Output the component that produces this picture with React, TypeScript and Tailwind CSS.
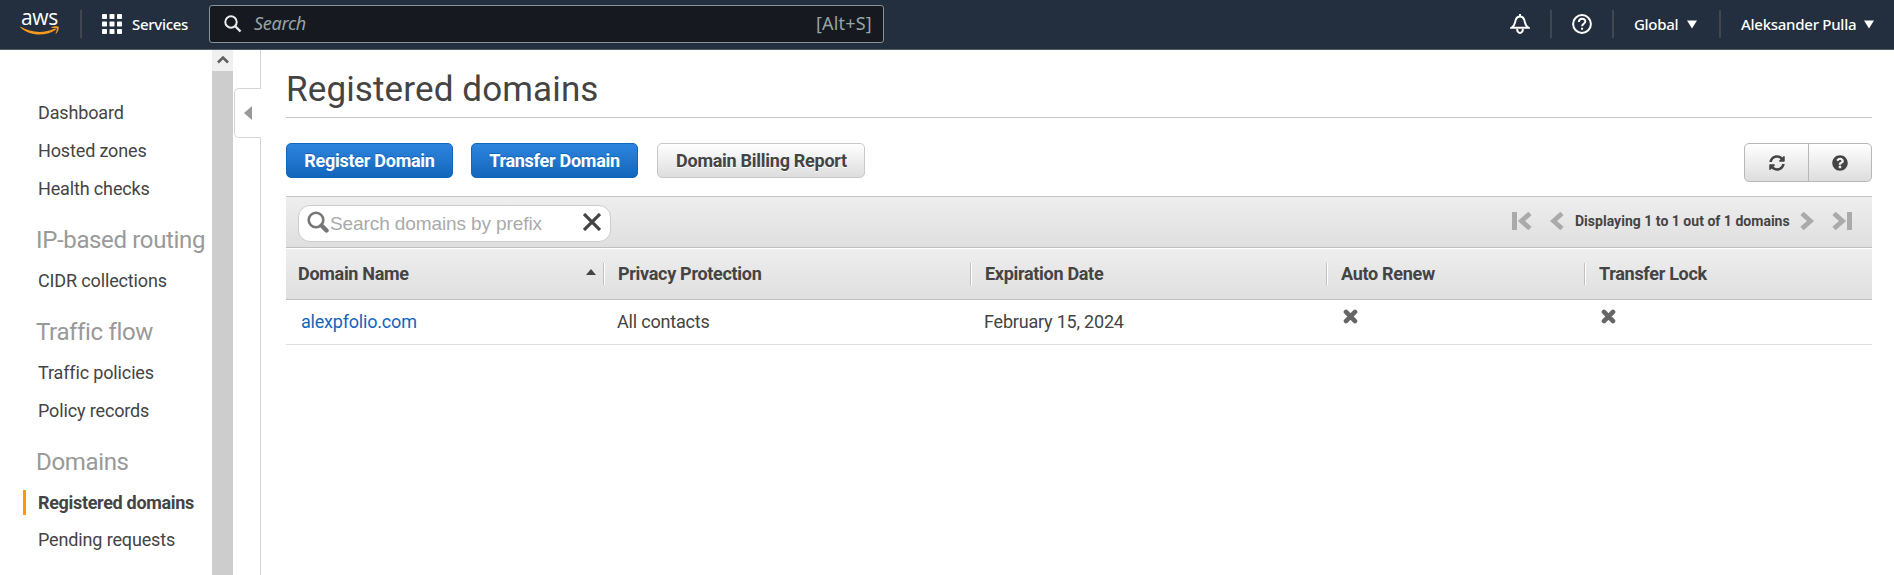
import type { ReactNode } from "react";
import { FaSyncAlt, FaQuestionCircle } from "react-icons/fa";

function Caret() {
  return (
    <svg width="10" height="9" viewBox="0 0 10 9" className="shrink-0">
      <path d="M0 0.5h10L5 8.5z" fill="#fff" />
    </svg>
  );
}

function Divider() {
  return <div className="h-7 w-[2px] shrink-0 bg-[#414750]" />;
}

function AwsLogo() {
  return (
    <div className="relative h-[26px] w-10 shrink-0">
      <span className="absolute -top-[8px] left-[1px] font-['Open_Sans'] text-[21px] leading-[28px] font-medium tracking-[-0.3px] text-white">aws</span>
      <svg className="absolute top-[15px] left-0" width="40" height="10" viewBox="0 0 40 10">
        <path d="M0.8 0.8C11 7 24 7.6 34.8 2.6c1.2-.4 1.6.6.6 1.3C25.500 10.700 9 10 .5 1.500-.1.9.3.5.8.8z" fill="#f7981f" />
        <path d="M31.500 1.300c2.500-1.600 6.300-1.300 7-.6.700.8 0 5-2.400 7.100-.4.3-.8.1-.6-.3.600-1.400 1.700-4.200 1.200-5-.5-.7-3.300-.5-4.800-.4-.5 0-.8-.5-.4-.8z" fill="#f7981f" />
      </svg>
    </div>
  );
}

function TopBar() {
  return (
    <header className="flex h-[50px] shrink-0 items-start border-b border-[#545b64] bg-[#232f3e] pl-5 font-['Noto_Sans'] text-[15px] font-medium text-white">
      <div className="pt-[11px]"><AwsLogo /></div>
      <div className="ml-5 pt-[10px]"><Divider /></div>
      <svg className="mt-[14px] ml-5 shrink-0" width="20" height="20" viewBox="0 0 20 20" fill="#fff">
        {[0, 7.5, 15].map((y) => [0, 7.5, 15].map((x) => <rect key={`${x}-${y}`} x={x} y={y} width="5" height="5" rx="0.8" />))}
      </svg>
      <span className="mt-[10px] ml-[10px] w-[77px] shrink-0 leading-[28px] tracking-[-0.3px]">Services</span>
      <div className="flex h-[38px] w-[675px] shrink-0 items-center rounded-[3px] border border-[#879596] bg-[#16191f] mt-[5px] pr-[11px] pl-[14px] text-[18px] font-normal text-[#95a5a6]">
        <svg width="18" height="18" viewBox="0 0 18 18" fill="none" stroke="#eaeded" strokeWidth="2">
          <circle cx="7" cy="7" r="5.700" />
          <path d="M11 11l5.500 5.500" strokeWidth="2.400" />
        </svg>
        <span className="-mt-px ml-3 italic tracking-[-0.3px]">Search</span>
        <span className="-mt-px ml-auto tracking-[0.2px]">[Alt+S]</span>
      </div>
      <div className="mr-5 ml-auto flex h-12 items-center">
        <svg width="20" height="21" viewBox="0 0 20 21" fill="none" stroke="#fff" strokeWidth="2" className="mr-[20px]">
          <path d="M10 0v3M1.500 13.800h17C14.700 11.300 15.300 9 14.300 6 13.500 3.500 12 2.500 10 2.500S6.500 3.500 5.700 6C4.700 9 5.300 11.300 1.500 13.800zM7.200 15c-.3 5.200 5.900 5.200 5.600 0" />
        </svg>
        <Divider />
        <svg width="20" height="20" viewBox="0 0 20 20" fill="none" stroke="#fff" strokeWidth="2" className="mx-5">
          <circle cx="10" cy="10" r="8.900" />
          <path d="M6.900 8c0-4.400 6.400-4.200 6.400-.6 0 2.300-3.200 2.300-3.200 4.800M10.100 13.800v2" />
        </svg>
        <Divider />
        <span className="mr-[7px] ml-5 w-[46px] tracking-[-0.3px]">Global</span>
        <Caret />
        <div className="ml-[22px]"><Divider /></div>
        <span className="mr-[7px] ml-5 w-[116px] whitespace-nowrap tracking-[-0.27px]">Aleksander Pulla</span>
        <Caret />
      </div>
    </header>
  );
}

function NavItem({ children, active = false }: { children: ReactNode; active?: boolean }) {
  if (active) {
    return (
      <a className="flex h-[37px] items-center pl-[23px]">
        <span className="h-[25px] w-[3px] bg-[#ff9900]" />
        <span className="ml-[12px] font-bold whitespace-nowrap tracking-[-0.32px]">{children}</span>
      </a>
    );
  }
  return <a className="block h-[38px] pl-[38px] leading-[38px] whitespace-nowrap tracking-[-0.14px]">{children}</a>;
}

function NavHeading({ children }: { children: ReactNode }) {
  return <h2 className="h-[54px] pt-[12px] pl-[36px] text-[24px] leading-[40px] whitespace-nowrap tracking-[-0.35px] text-[#999]">{children}</h2>;
}

function Sidebar() {
  return (
    <nav className="w-[212px] shrink-0 overflow-hidden pt-[44px] text-[18px] text-[#444]">
      <NavItem>Dashboard</NavItem>
      <NavItem>Hosted zones</NavItem>
      <NavItem>Health checks</NavItem>
      <NavHeading>IP-based routing</NavHeading>
      <NavItem>CIDR collections</NavItem>
      <NavHeading>Traffic flow</NavHeading>
      <NavItem>Traffic policies</NavItem>
      <NavItem>Policy records</NavItem>
      <NavHeading>Domains</NavHeading>
      <NavItem active>Registered domains</NavItem>
      <NavItem>Pending requests</NavItem>
    </nav>
  );
}

function Scrollbar() {
  return (
    <div className="w-[21px] shrink-0 bg-[#cdcdcd]">
      <div className="flex h-[21px] items-center justify-center bg-[#f0f0f0] pb-[2px]">
        <svg width="12" height="9" viewBox="0 0 12 9" fill="none" stroke="#606060" strokeWidth="2.600">
          <path d="M1 7.500l5-5 5 5" />
        </svg>
      </div>
    </div>
  );
}

function CollapseRail() {
  return (
    <div className="flex w-[28px] shrink-0 flex-col items-end">
      <div className="h-[38px] w-px bg-[#d5d5d5]" />
      <div className="flex h-[50px] w-[27px] items-center rounded-l-[5px] border border-r-0 border-[#d5d5d5] pl-[9px]">
        <svg width="8" height="14" viewBox="0 0 8 14"><path d="M8 0v14L0 7z" fill="#999" /></svg>
      </div>
      <div className="w-px flex-1 bg-[#d5d5d5]" />
    </div>
  );
}

function PrimaryButton({ children }: { children: ReactNode }) {
  return (
    <button className="h-[35px] w-[167px] rounded-[5px] border border-[#1166bb] bg-linear-to-b from-[#2e85de] to-[#1166bb] text-[18px] font-bold whitespace-nowrap tracking-[-0.27px] text-white [text-shadow:0_-1px_0_#1166bb]">
      {children}
    </button>
  );
}

function Chevron({ flip = false, bar = false }: { flip?: boolean; bar?: boolean }) {
  return (
    <svg width={bar ? 20 : 14} height="18" viewBox={bar ? "0 0 20 18" : "0 0 14 18"} className={flip ? "shrink-0 -scale-x-100" : "shrink-0"} fill="none" stroke="#aaa" strokeWidth="4.800">
      {bar && <path d="M2.500 0v18" strokeWidth="5" />}
      <path d={bar ? "M18 1.500L9.500 9l8.500 7.500" : "M12 1.500L3.500 9l8.500 7.500"} />
    </svg>
  );
}

function HeaderCell({ children }: { children: ReactNode }) {
  return (
    <div className="flex items-center">
      <div className="mr-[13px] h-[22px] w-[2px] border-r border-l border-r-white border-l-[#c0c0c0]" />
      <span className="-mt-[2px]">{children}</span>
    </div>
  );
}

function CrossMark() {
  return (
    <svg width="15" height="15" viewBox="0 0 15 15" stroke="#666" strokeWidth="4.600" strokeLinecap="round">
      <path d="M3 2.900l9 9.200M12 2.900l-9 9.200" />
    </svg>
  );
}

function DomainsTable() {
  return (
    <section className="mt-[13px] border-t border-[#c3c3c3]">
      <div className="flex h-[51px] items-start border-b border-[#bfbfbf] bg-linear-to-b from-[#eee] to-[#dfdfdf] pr-5 pl-3">
        <div className="mt-[8px] flex h-[37px] w-[313px] items-center rounded-[12px] border border-[#ccc] bg-white pl-[8px]">
          <svg width="22" height="22" viewBox="0 0 22 22" fill="none" stroke="#777" className="-mt-[3px]">
            <circle cx="9" cy="9" r="7.300" strokeWidth="2.600" />
            <path d="M14.500 14.500l5 5" strokeWidth="4.400" strokeLinecap="round" />
          </svg>
          <span className="mt-[2px] ml-[1px] font-['Liberation_Sans'] text-[19px] whitespace-nowrap tracking-[-0.1px] text-[#aaa]">Search domains by prefix</span>
          <svg width="18" height="18" viewBox="0 0 18 18" stroke="#444" strokeWidth="3.200" className="-mt-[4px] mr-[9px] ml-auto">
            <path d="M1 1l16 16M17 1L1 17" />
          </svg>
        </div>
        <div className="mt-[15px] ml-auto flex h-[18px] items-center">
          <Chevron bar />
          <div className="ml-[18px]"><Chevron /></div>
          <span className="ml-[11px] w-[214px] text-[14px] font-bold whitespace-nowrap tracking-[0.02px] text-[#444]">Displaying 1 to 1 out of 1 domains</span>
          <div className="ml-[11px]"><Chevron flip /></div>
          <div className="ml-[18px]"><Chevron bar flip /></div>
        </div>
      </div>
      <div className="grid h-[52px] grid-cols-[305px_367px_356px_258px_1fr] items-center border-t border-b border-t-white border-b-[#c0c0c0] bg-linear-to-b from-[#eee] to-[#dfdfdf] pl-3 text-[18px] font-bold tracking-[-0.3px] text-[#444]">
        <div className="flex items-center">
          <span className="-mt-[2px]">Domain Name</span>
          <svg width="10" height="6" viewBox="0 0 10 6" className="-mt-[4px] mr-[7px] ml-auto"><path d="M0 6h10L5 0z" fill="#444" /></svg>
        </div>
        <HeaderCell>Privacy Protection</HeaderCell>
        <HeaderCell>Expiration Date</HeaderCell>
        <HeaderCell>Auto Renew</HeaderCell>
        <HeaderCell>Transfer Lock</HeaderCell>
      </div>
      <div className="grid h-[45px] grid-cols-[305px_367px_356px_258px_1fr] border-b border-[#ddd] pl-3 text-[18px] leading-[44px] tracking-[-0.2px] text-[#444]">
        <a className="pl-[3px] text-[#1166bb]">alexpfolio.com</a>
        <span className="pl-[14px]">All contacts</span>
        <span className="pl-[14px]">February 15, 2024</span>
        <span className="pt-[9px] pl-[17px]"><CrossMark /></span>
        <span className="pt-[9px] pl-[17px]"><CrossMark /></span>
      </div>
    </section>
  );
}

export default function App() {
  return (
    <div className="flex h-[575px] w-full flex-col overflow-hidden bg-white font-[Roboto,sans-serif]">
      <TopBar />
      <div className="flex min-h-0 flex-1">
        <Sidebar />
        <Scrollbar />
        <CollapseRail />
        <main className="min-w-0 flex-1 pr-[22px] pl-[25px]">
          <h1 className="h-[68px] border-b border-[#c8c8c8] pt-[16px] text-[35px] leading-[48px] tracking-[0.13px] text-[#444]">Registered domains</h1>
          <div className="mt-[25px] flex h-[40px] items-start">
            <PrimaryButton>Register Domain</PrimaryButton>
            <div className="ml-[18px]"><PrimaryButton>Transfer Domain</PrimaryButton></div>
            <button className="ml-[19px] h-[35px] w-[208px] rounded-[5px] border border-[#c8c8c8] bg-linear-to-b from-white to-[#ddd] pl-[1px] text-[18px] font-bold whitespace-nowrap tracking-[-0.27px] text-[#444] [text-shadow:0_1px_0_#fff]">Domain Billing Report</button>
            <div className="ml-auto flex h-[39px] w-[128px] overflow-hidden rounded-[5px] border border-[#b8b8b8] bg-linear-to-b from-white to-[#ddd] text-[16px] text-[#444]">
              <button className="flex w-[64px] items-center justify-center border-r border-[#b8b8b8]"><FaSyncAlt /></button>
              <button className="flex flex-1 items-center justify-center"><FaQuestionCircle /></button>
            </div>
          </div>
          <DomainsTable />
        </main>
      </div>
    </div>
  );
}
